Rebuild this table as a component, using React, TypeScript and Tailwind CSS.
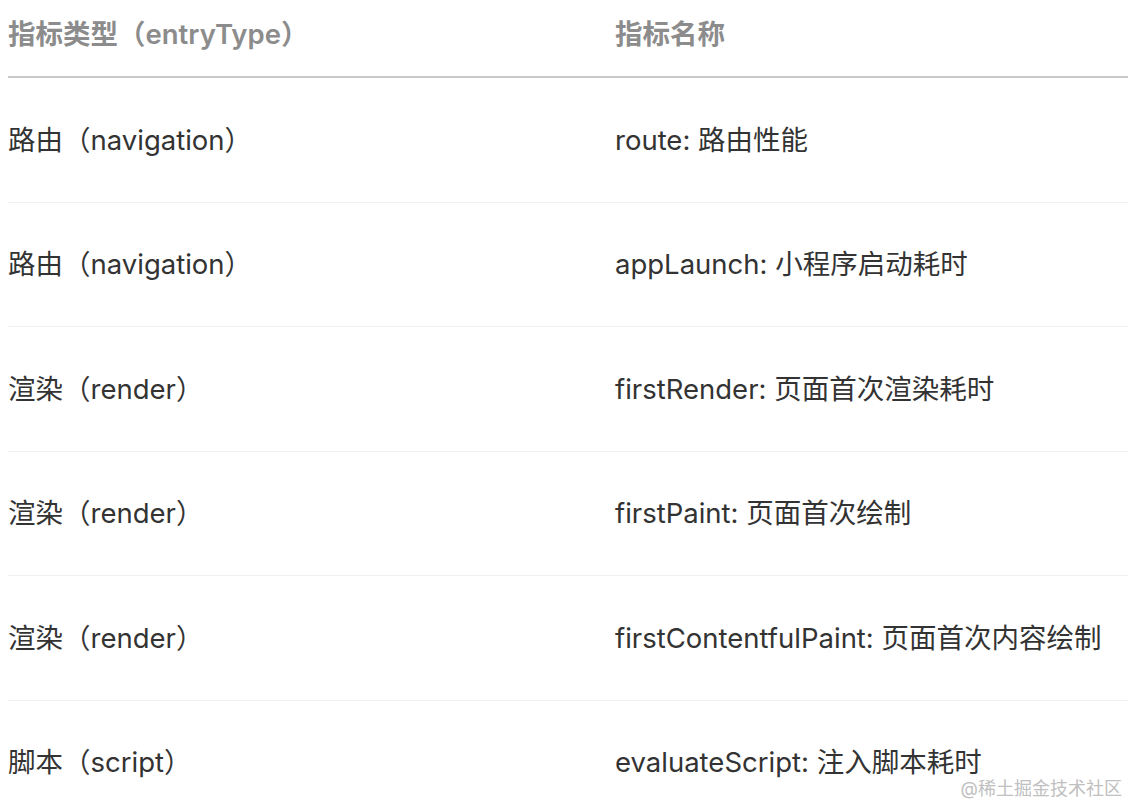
const rows = [
  { type: "路由（navigation）", name: "route: 路由性能" },
  { type: "路由（navigation）", name: "appLaunch: 小程序启动耗时" },
  { type: "渲染（render）", name: "firstRender: 页面首次渲染耗时" },
  { type: "渲染（render）", name: "firstPaint: 页面首次绘制" },
  { type: "渲染（render）", name: "firstContentfulPaint: 页面首次内容绘制" },
  { type: "脚本（script）", name: "evaluateScript: 注入脚本耗时" },
];

export default function App() {
  return (
    <div
      className="relative h-[806px] w-[1128px] overflow-hidden bg-white pl-2"
      style={{ fontFamily: 'Inter, "Noto Sans CJK SC", sans-serif' }}
    >
      {/* 表头 */}
      <div className="grid h-[78px] grid-cols-[607px_1fr] border-b-2 border-[#c9c9c9] pb-[6px] text-[27.5px] font-semibold text-[#8c8c8c]">
        <div className="flex items-center">指标类型（entryType）</div>
        <div className="flex items-center">指标名称</div>
      </div>

      {rows.map((r, i) => (
        <div
          key={i}
          className="grid h-[124.5px] grid-cols-[607px_1fr] border-b-[1.5px] border-[#f0f0f0] text-[27.5px] text-[#333333]"
        >
          <div className="flex items-center pt-[1px]">{r.type}</div>
          <div className="flex items-center pt-[1px]">{r.name}</div>
        </div>
      ))}

      {/* 水印 */}
      <div className="absolute bottom-[4px] right-[6px] text-[18px] text-[#c0c0c0]">@稀土掘金技术社区</div>
    </div>
  );
}
